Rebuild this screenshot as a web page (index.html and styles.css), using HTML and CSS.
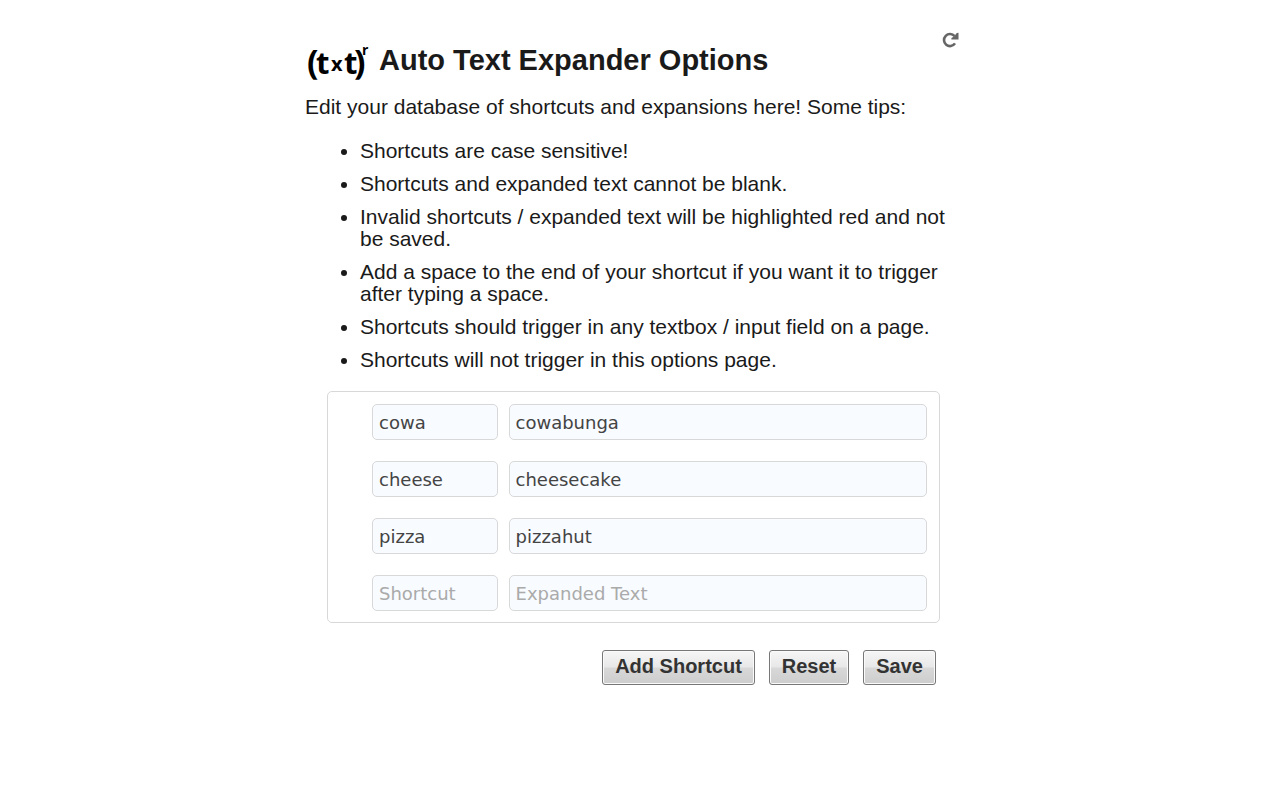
FILE: index.html
```html
<!DOCTYPE html>
<html lang="en">
<head>
<meta charset="utf-8">
<meta name="viewport" content="width=device-width, initial-scale=1">
<title>Auto Text Expander Options</title>
<link rel="stylesheet" href="styles.css">
</head>
<body>
<main class="page">
  <header class="header">
    <svg class="logo" viewBox="0 0 64 44" role="img" aria-label="Auto Text Expander logo">
      <text class="logo-letters" y="32"><tspan class="logo-paren" x="2">(</tspan><tspan x="11">t</tspan><tspan class="logo-x" x="26" dy="-3">x</tspan><tspan x="39" dy="3">t</tspan><tspan class="logo-paren" x="49">)</tspan><tspan class="logo-r" x="57" dy="-19">r</tspan></text>
    </svg>
    <h1 class="title">Auto Text Expander Options</h1>
    <button class="refresh" type="button" aria-label="Refresh">
      <svg class="refresh-icon" viewBox="0 0 18 16" aria-hidden="true">
        <path d="M12.6 4.2A6 6 0 1 0 13 11.4" fill="none" stroke="#666" stroke-width="2.6"/>
        <path d="M16.5 0.8V7.6H9.4V6L12 4.4L14.8 1Z" fill="#666"/>
      </svg>
    </button>
  </header>
  <p class="intro">Edit your database of shortcuts and expansions here! Some tips:</p>
  <ul class="tips">
    <li>Shortcuts are case sensitive!</li>
    <li>Shortcuts and expanded text cannot be blank.</li>
    <li>Invalid shortcuts / expanded text will be highlighted red and not be saved.</li>
    <li>Add a space to the end of your shortcut if you want it to trigger after typing a space.</li>
    <li>Shortcuts should trigger in any textbox / input field on a page.</li>
    <li>Shortcuts will not trigger in this options page.</li>
  </ul>
  <form class="editor">
    <div class="entries">
      <div class="entry">
        <input class="field" type="text" value="cowa" placeholder="Shortcut" aria-label="Shortcut">
        <input class="field" type="text" value="cowabunga" placeholder="Expanded Text" aria-label="Expanded Text">
      </div>
      <div class="entry">
        <input class="field" type="text" value="cheese" placeholder="Shortcut" aria-label="Shortcut">
        <input class="field" type="text" value="cheesecake" placeholder="Expanded Text" aria-label="Expanded Text">
      </div>
      <div class="entry">
        <input class="field" type="text" value="pizza" placeholder="Shortcut" aria-label="Shortcut">
        <input class="field" type="text" value="pizzahut" placeholder="Expanded Text" aria-label="Expanded Text">
      </div>
      <div class="entry">
        <input class="field" type="text" placeholder="Shortcut" aria-label="Shortcut">
        <input class="field" type="text" placeholder="Expanded Text" aria-label="Expanded Text">
      </div>
    </div>
    <div class="actions">
      <button class="button" type="button">Add Shortcut</button>
      <button class="button" type="reset">Reset</button>
      <button class="button" type="submit">Save</button>
    </div>
  </form>
</main>
</body>
</html>
```
FILE: styles.css
```css
* {
  box-sizing: border-box;
}

body {
  margin: 0;
  background: #fff;
  color: #1a1a1a;
  font-family: "Liberation Sans", Arial, sans-serif;
  font-size: 21px;
  line-height: 22px;
}

.page {
  max-width: 670px;
  margin: 0 auto;
  padding: 32px 15px 32px 0;
}

.header {
  display: flex;
  align-items: flex-start;
}

.logo {
  flex: none;
  width: 64px;
  height: 44px;
  margin: 10px 10px 0 0;
  overflow: visible;
  fill: #000;
}

.logo-letters {
  font-family: "Open Sans", sans-serif;
  font-size: 31px;
  font-weight: 700;
}

.logo-paren {
  font-size: 34px;
}

.logo-x {
  font-size: 20px;
}

.logo-r {
  font-size: 14px;
}

.title {
  flex: 1;
  margin: 12px 0 0;
  font-size: 29px;
  line-height: 32px;
}

.refresh {
  padding: 0;
  border: 0;
  background: none;
  line-height: 0;
  cursor: pointer;
}

.refresh-icon {
  width: 18px;
  height: 16px;
}

.intro {
  margin: 10px 0 22px;
}

.tips {
  display: grid;
  gap: 11px;
  margin: 0;
  padding-left: 55px;
}

.editor {
  margin: 20px 20px 0 22px;
}

.entries {
  display: grid;
  gap: 21px;
  padding: 12px 12px 11px 44px;
  border: 1px solid #d8d8d8;
  border-radius: 5px;
}

.entry {
  display: grid;
  grid-template-columns: 3fr 10fr;
  gap: 11px;
}

.field {
  width: 100%;
  min-width: 0;
  height: 36px;
  padding: 0 6px;
  border: 1px solid #d8d8d8;
  border-radius: 5px;
  background: #f8fbff;
  color: #444;
  font-family: "DejaVu Sans", Verdana, sans-serif;
  font-size: 18px;
}

.field::placeholder {
  color: #aaa;
  opacity: 1;
}

.actions {
  display: flex;
  justify-content: flex-end;
  gap: 14px;
  margin: 27px 4px 0 0;
}

.button {
  height: 35px;
  padding: 0 12px 2px;
  border: 1px solid #777;
  border-radius: 3px;
  background: linear-gradient(#f6f6f6, #e8e8e8 48%, #d8d8d8 52%, #cdcdcd);
  box-shadow: inset 0 0 0 1px #fafafa;
  color: #333;
  font-family: inherit;
  font-size: 20px;
  font-weight: 700;
}
```
